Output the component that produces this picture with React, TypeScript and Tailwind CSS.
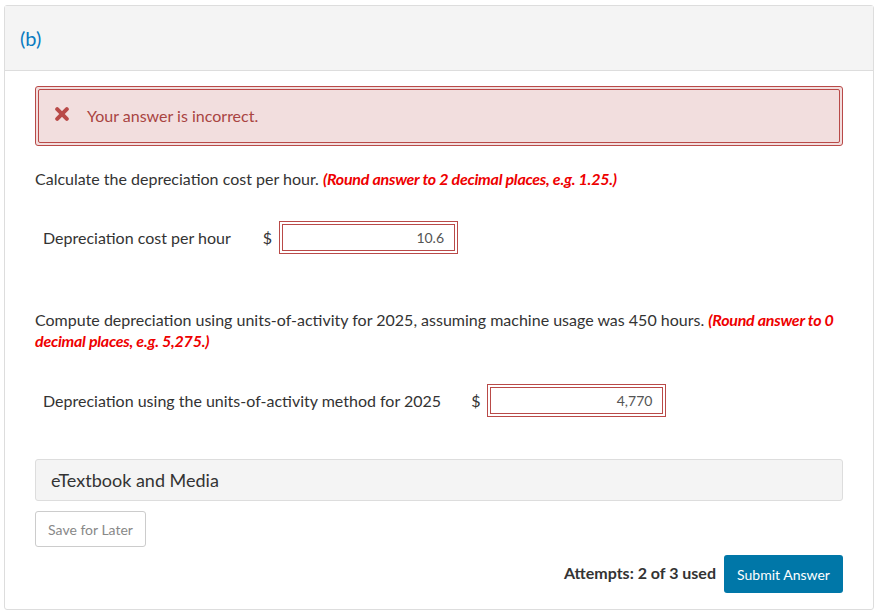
export default function App() {
  return (
    <div className="min-h-screen bg-white pt-[5px] pl-[4px] font-['Lato','Liberation_Sans',sans-serif] text-[#333]">
      <div className="w-[870px] rounded-[3px] border border-[#ddd] bg-white">
        {/* part header */}
        <div className="flex h-[65px] items-center border-b border-[#ddd] bg-[#f4f4f4] px-[15px]">
          <span className="text-[20px] text-[#0a7bc1]">(b)</span>
        </div>

        <div className="px-[30px] pt-[15px] pb-[16px]">
          {/* feedback */}
          <div className="h-[60px] rounded-[3px] border border-[#b94a48] bg-[#f2dede] p-[2px]">
            <div className="flex h-full items-center rounded-[2px] border border-[#b94a48] pl-[16px]">
              <svg width="14" height="14" viewBox="0 0 14 14" className="-mt-[4px]">
                <path d="M2.2 2.2 L11.8 11.8 M11.8 2.2 L2.2 11.8" stroke="#b94a48" strokeWidth="4" strokeLinecap="round" />
              </svg>
              <span className="ml-[18px] text-[16px] text-[#a94442]">Your answer is incorrect.</span>
            </div>
          </div>

          <p className="mt-[21px] text-[16px] leading-[24px]">
            Calculate the depreciation cost per hour.{" "}
            <span className="font-bold italic tracking-[-0.25px] text-[#e00]">(Round answer to 2 decimal places, e.g. 1.25.)</span>
          </p>

          <div className="mt-[30px] flex items-center pl-[8px]">
            <span className="text-[16px]">Depreciation cost per hour</span>
            <span className="ml-[32px] text-[16px]">$</span>
            <div className="ml-[7px] h-[33px] w-[179px] border border-[#b94a48] p-[2px]">
              <div className="flex h-full items-center justify-end border border-[#b94a48] pr-[10px] text-[14px] text-[#555]">
                10.6
              </div>
            </div>
          </div>

          <p className="mt-[55px] text-[16px] leading-[21px]">
            Compute depreciation using units-of-activity for 2025, assuming machine usage was 450 hours.{" "}
            <span className="font-bold italic tracking-[-0.25px] text-[#e00]">(Round answer to 0 decimal places, e.g. 5,275.)</span>
          </p>

          <div className="mt-[33px] flex items-center pl-[8px]">
            <span className="text-[16px]">Depreciation using the units-of-activity method for 2025</span>
            <span className="ml-[30px] text-[16px]">$</span>
            <div className="ml-[7px] h-[33px] w-[179px] border border-[#b94a48] p-[2px]">
              <div className="flex h-full items-center justify-end border border-[#b94a48] pr-[10px] text-[14px] text-[#555]">
                4,770
              </div>
            </div>
          </div>

          {/* resources */}
          <div className="mt-[42px] flex h-[42px] items-center rounded-[3px] border border-[#ddd] bg-[#f4f4f4] px-[15px]">
            <span className="text-[18px]">eTextbook and Media</span>
          </div>

          <button className="mt-[10px] h-[36px] w-[111px] rounded-[3px] border border-[#ccc] bg-white text-[14px] text-[#888]">
            Save for Later
          </button>

          <div className="mt-[8px] flex items-center justify-end gap-[8px]">
            <span className="-mt-[3px] text-[16px] font-bold">Attempts: 2 of 3 used</span>
            <button className="h-[38px] w-[119px] rounded-[3px] bg-[#0077a8] text-[14px] text-white">
              Submit Answer
            </button>
          </div>
        </div>
      </div>
    </div>
  );
}
